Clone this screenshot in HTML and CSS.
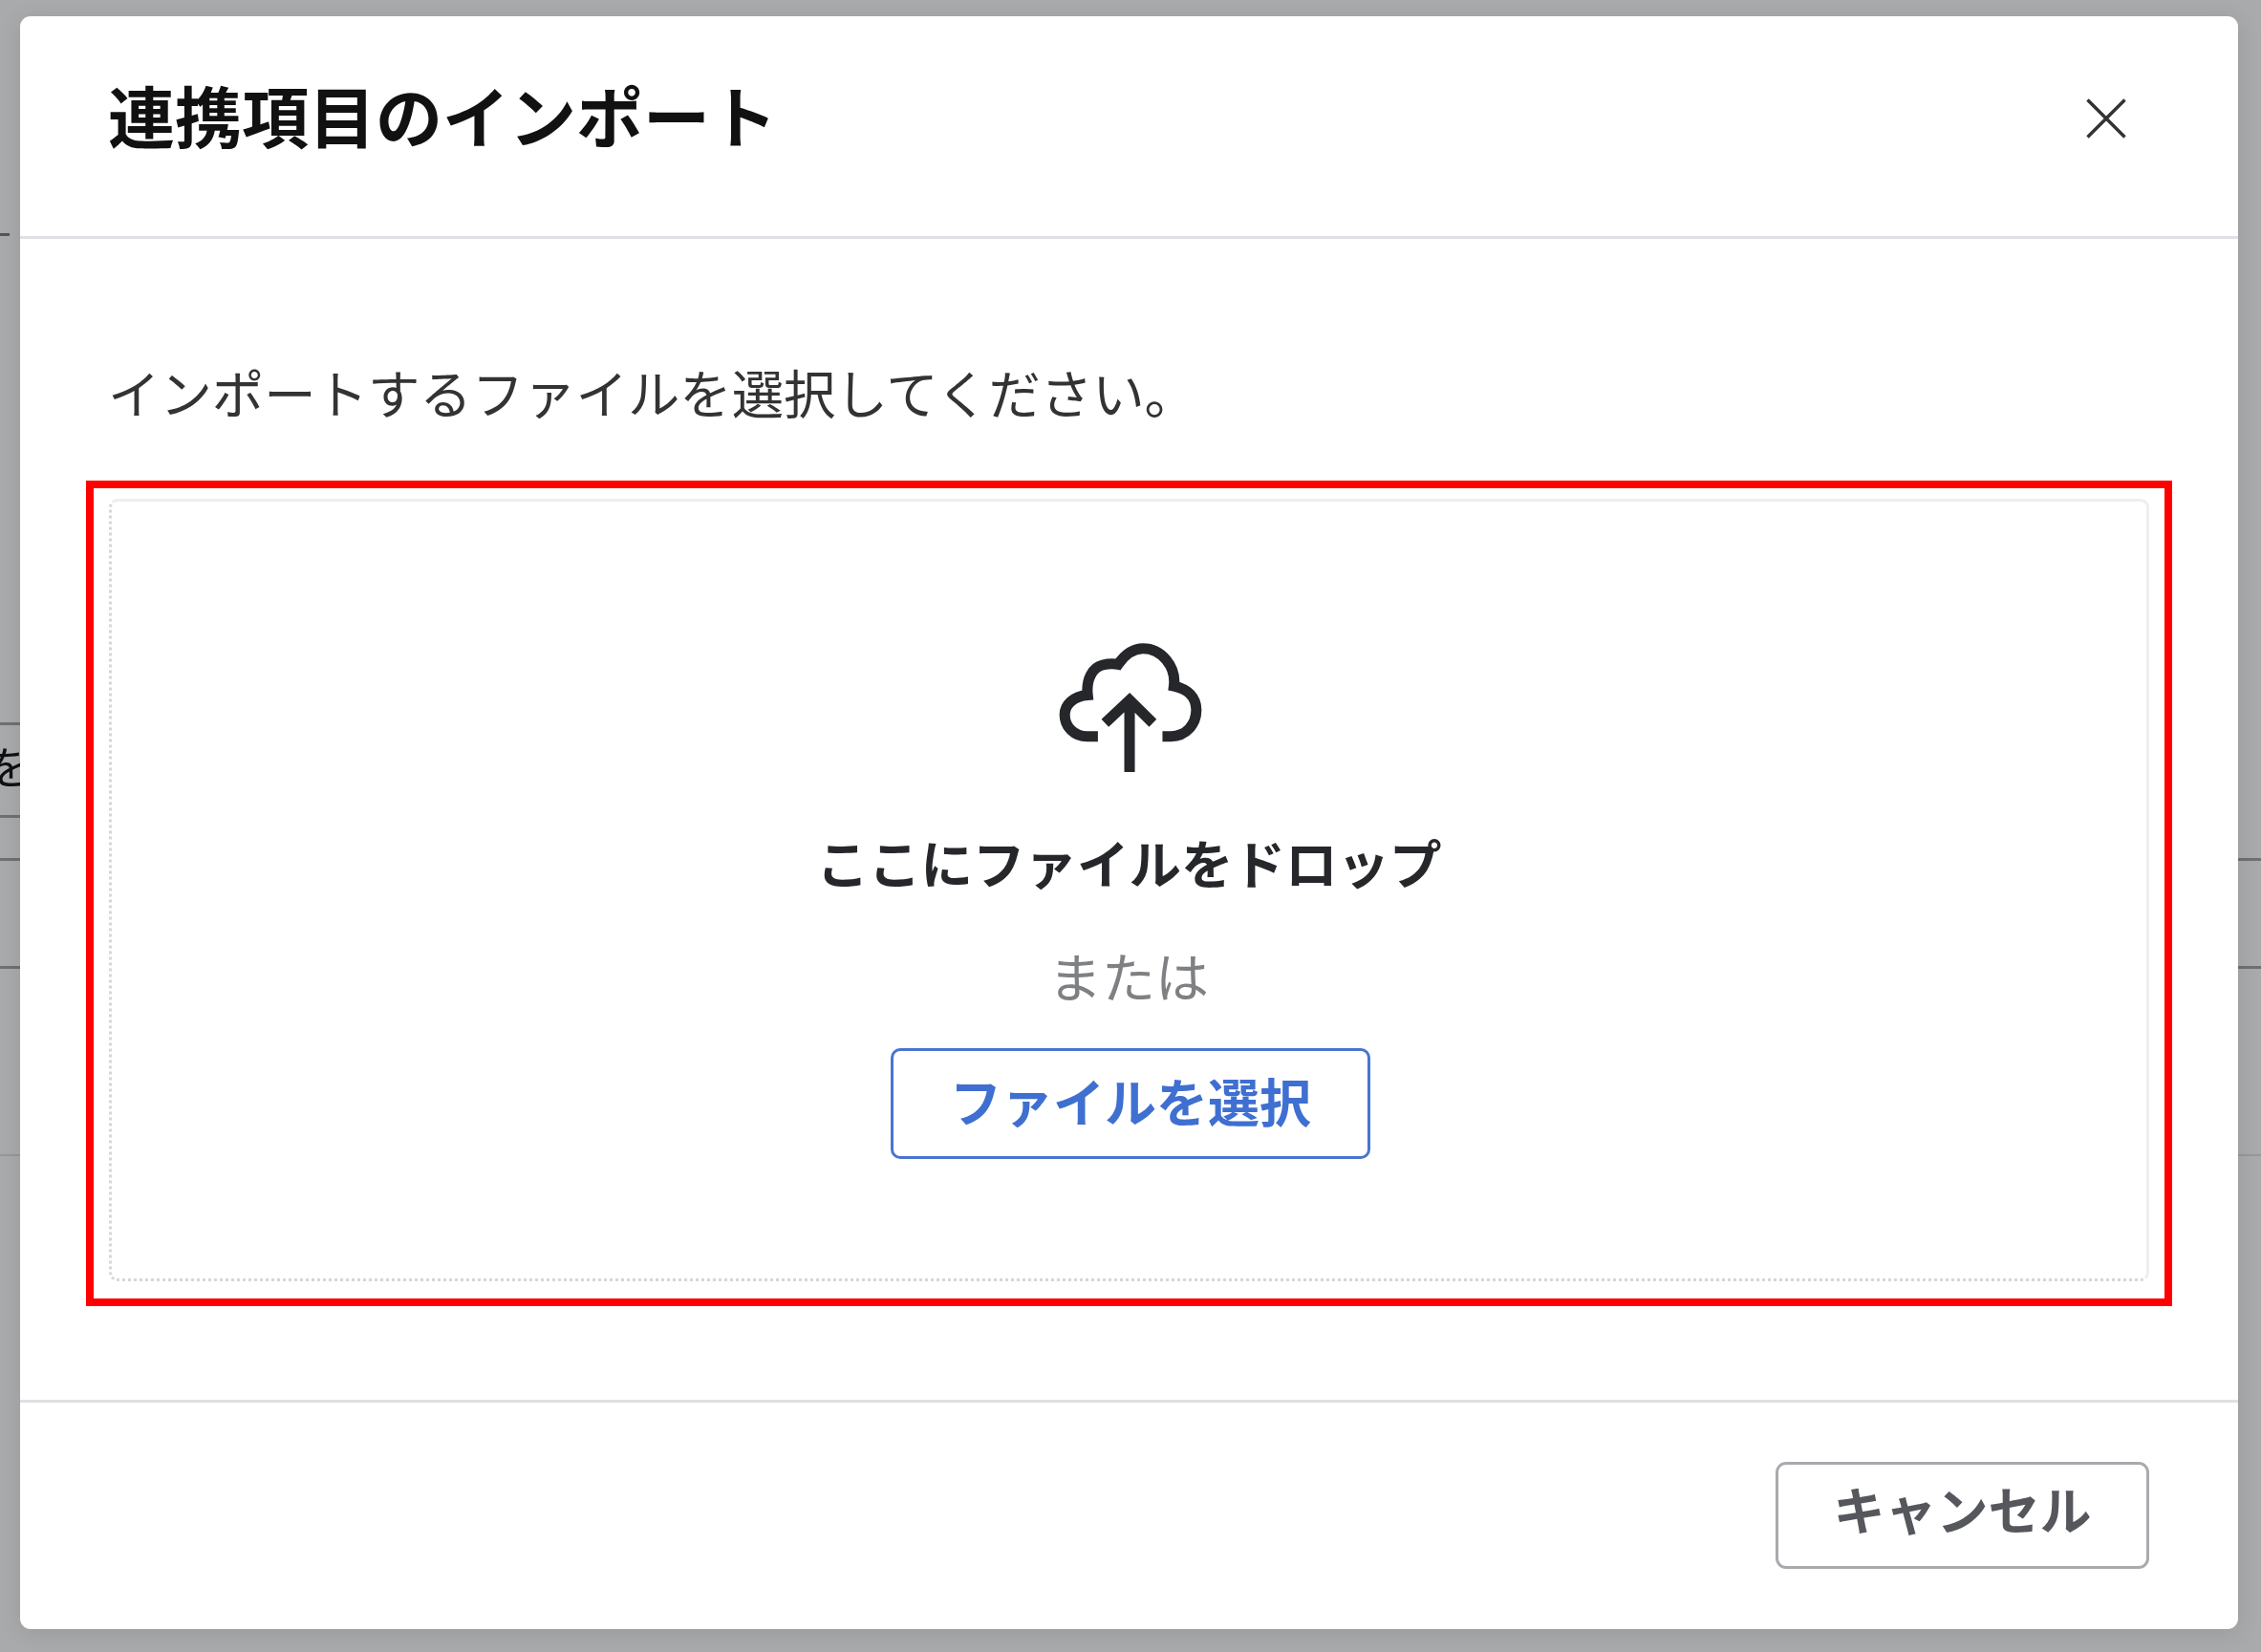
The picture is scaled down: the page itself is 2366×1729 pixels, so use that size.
FILE: index.html
```html
<!DOCTYPE html>
<html lang="ja">
<head>
<meta charset="utf-8">
<title>連携項目のインポート</title>
<link rel="stylesheet" href="styles.css">
</head>
<body>
<div class="page">
  <div class="backdrop">
    <div class="rule rule-stub rule-first"></div>
    <div class="rule rule-short rule-second"></div>
    <div class="behind-text">を</div>
    <div class="rule rule-short rule-third"></div>
    <div class="rule rule-fourth"></div>
    <div class="rule rule-fifth"></div>
    <div class="rule rule-faint rule-sixth"></div>
  </div>
  <div class="modal">
    <header class="modal-header">
      <h1 class="modal-title">連携項目のインポート</h1>
      <button class="close" type="button" aria-label="閉じる">
        <svg class="close-icon" viewBox="0 0 42 42"><path d="M1.5 1.5 40.5 40.5M40.5 1.5 1.5 40.5"/></svg>
      </button>
    </header>
    <section class="modal-body">
      <p class="lead">インポートするファイルを選択してください。</p>
      <div class="frame">
        <div class="dropzone">
          <svg class="cloud" viewBox="160 55 480 428">
            <path class="cloud-line" d="M503 365H530C580 365 612 325 612 280C612 240 585 212 540 203C548 140 500 82 440 82C410 82 385 97 360 133C345 130 330 130 310 135C280 142 256 178 262 232C215 235 188 265 188 295C188 335 220 365 260 365H295"/>
            <path class="cloud-line" d="M397 480V250M318 322 397 248 472 322"/>
          </svg>
          <div class="drop-title">ここにファイルをドロップ</div>
          <div class="drop-or">または</div>
          <button class="btn btn-primary" type="button">ファイルを選択</button>
        </div>
      </div>
    </section>
    <footer class="modal-footer">
      <button class="btn btn-cancel" type="button">キャンセル</button>
    </footer>
  </div>
</div>
</body>
</html>
```

FILE: styles.css
```css
* { box-sizing: border-box; }
html, body { margin: 0; padding: 0; }
body { font-family: "Noto Sans CJK JP", "Noto Sans", sans-serif; }
.page {
  position: relative;
  width: 2366px;
  height: 1729px;
  overflow: hidden;
  background: #a9aaac;
}
.backdrop { display: flex; flex-direction: column; filter: blur(.7px); }
.rule { height: 3px; background: #6f7073; flex: none; }
.rule-stub { width: 10px; }
.rule-short { width: 30px; }
.rule-faint { background: #96979a; height: 2px; }
.rule-first { margin-top: 244px; background: #50565c; }
.rule-second { margin-top: 509px; }
.behind-text {
  height: 94px;
  font-size: 46px;
  line-height: 82px;
  color: #111;
  margin-left: -14px;
}
.rule-third { margin-top: 0; }
.rule-fourth { margin-top: 42px; }
.rule-fifth { margin-top: 110px; }
.rule-sixth { margin-top: 194px; }

.modal {
  position: absolute;
  left: 21px;
  top: 17px;
  width: 2321px;
  height: 1688px;
  background: #fff;
  border-radius: 11px;
  box-shadow: 0 4px 24px rgba(0, 0, 0, .1);
  display: flex;
  flex-direction: column;
}
.modal-header {
  height: 233px;
  border-bottom: 3px solid #dfe0e3;
  padding: 0 117px 0 92px;
  display: flex;
  align-items: center;
  justify-content: space-between;
  flex: none;
}
.modal-title {
  margin: 0 0 25px;
  font-size: 70px;
  font-weight: 700;
  line-height: 100px;
  color: #111;
}
.modal-title, .lead, .close-icon, .cloud, .drop-title, .drop-or, .btn { filter: blur(.7px); }
.close {
  width: 42px;
  height: 42px;
  padding: 0;
  border: 0;
  background: none;
  display: flex;
  margin-bottom: 16px;
}
.close-icon { width: 42px; height: 42px; fill: none; stroke: #333; stroke-width: 3.5; }
.modal-body {
  height: 1215px;
  padding: 128px 69px 0;
  flex: none;
}
.lead {
  margin: -3px 0 0 23px;
  height: 128px;
  font-size: 54.4px;
  line-height: 70px;
  font-weight: 400;
  color: #333;
}
.frame {
  width: 2183px;
  height: 864px;
  border: 8px solid #f00;
  padding: 11px 16px 18px;
}
.dropzone {
  height: 100%;
  border: 3px solid #eceef1;
  border-left: 3px dotted #d4d6d9;
  border-bottom: 3px dotted #d4d6d9;
  border-radius: 9px;
  display: flex;
  flex-direction: column;
  align-items: center;
  padding: 145px 0 0 3px;
}
.cloud { width: 156px; height: 139px; flex: none; fill: none; }
.cloud-line { stroke: #25272b; stroke-width: 34; stroke-linejoin: miter; }
.drop-title {
  margin: 54px 3px 0 0;
  font-size: 54.5px;
  line-height: 78px;
  font-weight: 700;
  color: #25272b;
}
.drop-or {
  margin: 40px 4px 0 0;
  font-size: 56px;
  line-height: 78px;
  color: #7f8083;
}
.btn {
  font-family: inherit;
  font-size: 54px;
  font-weight: 700;
  line-height: 1;
  background: #fff;
  display: flex;
  align-items: center;
  justify-content: center;
}
.btn-primary {
  margin-top: 38px;
  width: 502px;
  height: 116px;
  padding: 0 0 6px;
  border: 3px solid #4a74d0;
  border-radius: 10px;
  color: #3f6fd1;
}
.modal-footer {
  flex: 1;
  padding: 62px 93px 0 0;
  display: flex;
  justify-content: flex-end;
  align-items: flex-start;
  border-top: 3px solid #dfe0e3;
}
.btn-cancel {
  width: 391px;
  height: 112px;
  padding: 0 0 14px;
  border: 3px solid #a9aaae;
  border-radius: 11px;
  color: #55575c;
}
```
